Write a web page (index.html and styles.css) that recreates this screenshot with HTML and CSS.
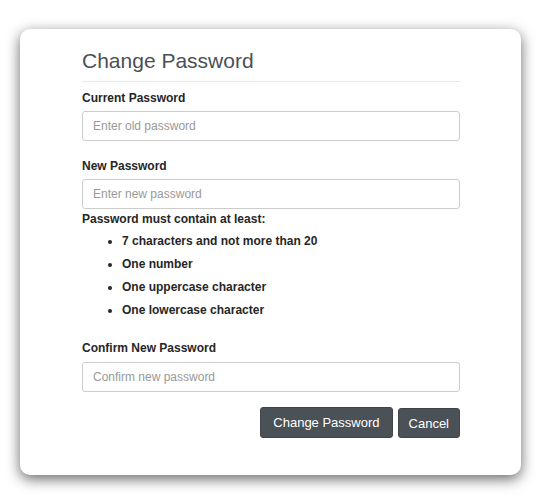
FILE: index.html
```html
<!DOCTYPE html>
<html>
<head>
<meta charset="utf-8">
<link rel="stylesheet" href="styles.css">
</head>
<body>
<div class="modal">
  <h2 class="title">Change Password</h2>
  <form class="form">
    <div class="group">
      <label class="label">Current Password</label>
      <input class="input" type="password" placeholder="Enter old password">
    </div>
    <div class="group">
      <label class="label">New Password</label>
      <input class="input" type="password" placeholder="Enter new password">
      <div class="rules-head">Password must contain at least:</div>
      <ul class="rules">
        <li>7 characters and not more than 20</li>
        <li>One number</li>
        <li>One uppercase character</li>
        <li>One lowercase character</li>
      </ul>
    </div>
    <div class="group group-last">
      <label class="label">Confirm New Password</label>
      <input class="input" type="password" placeholder="Confirm new password">
    </div>
    <div class="actions">
      <button type="button" class="btn btn-primary">Change Password</button>
      <button type="button" class="btn">Cancel</button>
    </div>
  </form>
</div>
</body>
</html>
```

FILE: styles.css
```css
html, body {
  margin: 0;
  padding: 0;
  background: #fff;
}
body {
  font-family: "Liberation Sans", Arial, sans-serif;
  color: #333;
  padding: 29px 24px 25px 20px;
}
.modal {
  background: #fff;
  border-radius: 10px;
  box-shadow: 0 4px 14px rgba(0, 0, 0, 0.6);
  padding: 18px 61px 37px 62px;
  height: 391px;
}
.title {
  margin: 0;
  font-size: 21px;
  font-weight: normal;
  color: #4a5056;
  line-height: 28px;
  padding-bottom: 6px;
  border-bottom: 1px solid #e8e8e8;
}
.form {
  margin: 0;
}
.group {
  margin-top: 8px;
}
.group + .group {
  margin-top: 17px;
}
.group + .group-last {
  margin-top: 18px;
}
.label {
  display: block;
  font-size: 12px;
  font-weight: bold;
  color: #262626;
  line-height: 16px;
  margin-bottom: 5px;
}
.group-last .label {
  margin-bottom: 6px;
}
.input {
  display: block;
  box-sizing: border-box;
  width: 100%;
  height: 30px;
  margin: 0;
  padding: 0 10px;
  border: 1px solid #ccc;
  border-radius: 3px;
  font-family: "Liberation Sans", Arial, sans-serif;
  font-size: 12px;
  color: #555;
  background: #fff;
}
.input::placeholder {
  color: #999;
}
.rules-head {
  font-size: 12px;
  font-weight: bold;
  color: #262626;
  line-height: 16px;
  margin-top: 2px;
}
.rules {
  margin: 3px 0 0 0;
  padding-left: 40px;
  font-size: 12px;
  font-weight: bold;
  color: #262626;
}
.rules li {
  line-height: 23px;
}
.actions {
  display: flex;
  justify-content: flex-end;
  align-items: flex-end;
  gap: 5px;
  margin-top: 15px;
}
.btn {
  font-family: "Liberation Sans", Arial, sans-serif;
  font-size: 13px;
  color: #fff;
  background: #4a5157;
  border: 1px solid #3f454a;
  border-radius: 3px;
  height: 30px;
  padding: 0 10px;
  cursor: pointer;
}
.btn-primary {
  height: 31px;
  padding: 0 12px;
}
```
